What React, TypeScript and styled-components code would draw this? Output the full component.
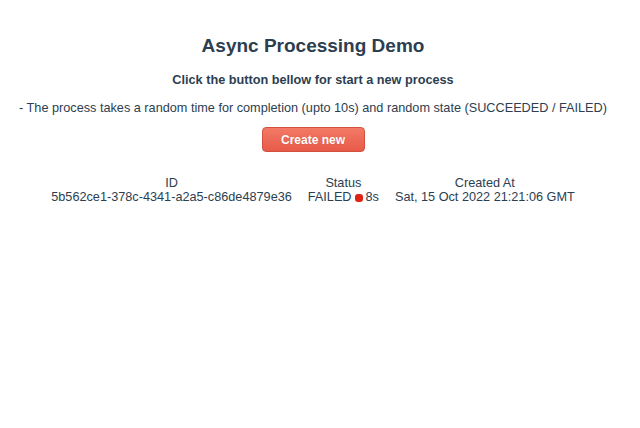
import React from "react";
import styled, { createGlobalStyle } from "styled-components";

const Global = createGlobalStyle`
  html, body { margin: 0; padding: 0; background: #ffffff; }
  body { font-family: "Liberation Sans", Arial, Helvetica, sans-serif; color: #2c3e50; }
`;

const Page = styled.div`
  display: flex;
  flex-direction: column;
  align-items: center;
  text-align: center;
  padding: 34px 14px 0 0;
`;

const Title = styled.h1`
  margin: 0;
  font-size: 19px;
  font-weight: bold;
  line-height: 24px;
`;

const Subtitle = styled.h4`
  margin: 14px 0 0;
  font-size: 12.7px;
  font-weight: bold;
  line-height: 16px;
`;

const Note = styled.p`
  margin: 12px 0 0;
  font-size: 12.7px;
  line-height: 16px;
`;

const Button = styled.button`
  margin-top: 11px;
  width: 103px;
  height: 25px;
  padding: 0;
  border: 1px solid #d2503f;
  border-radius: 4px;
  background: linear-gradient(#f27a66, #e85a48);
  color: #ffffff;
  font-family: "Liberation Sans", Arial, sans-serif;
  font-size: 12px;
  font-weight: bold;
  text-shadow: 0 0 1px rgba(150, 40, 30, 0.4);
  cursor: pointer;
`;

const Table = styled.table`
  margin-top: 24px;
  border-collapse: collapse;
  font-size: 12.7px;
`;

const HeadCell = styled.th`
  padding: 0 8px;
  line-height: 14px;
  font-weight: normal;
  white-space: nowrap;
`;

const Cell = styled.td`
  padding: 0 8px;
  line-height: 14px;
  white-space: nowrap;
`;

const Dot = styled.span`
  display: inline-block;
  width: 8px;
  height: 8px;
  border-radius: 3px;
  background: #e02414;
  margin: 0 3px 0 3px;
  vertical-align: -1px;
`;

export default function App() {
  return (
    <>
      <Global />
      <Page>
        <Title>Async Processing Demo</Title>
        <Subtitle>Click the button bellow for start a new process</Subtitle>
        <Note>
          - The process takes a random time for completion (upto 10s) and random state (SUCCEEDED / FAILED)
        </Note>
        <Button>Create new</Button>
        <Table>
          <thead>
            <tr>
              <HeadCell>ID</HeadCell>
              <HeadCell>Status</HeadCell>
              <HeadCell>Created At</HeadCell>
            </tr>
          </thead>
          <tbody>
            <tr>
              <Cell>5b562ce1-378c-4341-a2a5-c86de4879e36</Cell>
              <Cell>
                FAILED<Dot />8s
              </Cell>
              <Cell>Sat, 15 Oct 2022 21:21:06 GMT</Cell>
            </tr>
          </tbody>
        </Table>
      </Page>
    </>
  );
}
